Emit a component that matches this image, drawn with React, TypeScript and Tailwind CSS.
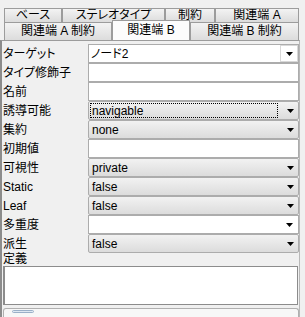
import React from 'react';

type Row = {
  label: string;
  kind: 'combo' | 'text' | 'select' | 'edit';
  value?: string;
  focus?: boolean;
};

const rows: Row[] = [
  { label: 'ターゲット', kind: 'combo', value: 'ノード2' },
  { label: 'タイプ修飾子', kind: 'text' },
  { label: '名前', kind: 'text' },
  { label: '誘導可能', kind: 'select', value: 'navigable', focus: true },
  { label: '集約', kind: 'select', value: 'none' },
  { label: '初期値', kind: 'text' },
  { label: '可視性', kind: 'select', value: 'private' },
  { label: 'Static', kind: 'select', value: 'false' },
  { label: 'Leaf', kind: 'select', value: 'false' },
  { label: '多重度', kind: 'edit' },
  { label: '派生', kind: 'select', value: 'false' },
];

function Arrow() {
  return (
    <svg width="7" height="4" viewBox="0 0 7 4" className="block">
      <path d="M0 0 H7 L3.5 4 Z" fill="#000" />
    </svg>
  );
}

function Tab({ label, w, selected, top }: { label: string; w: string; selected?: boolean; top?: boolean }) {
  return (
    <div
      className={`${w} flex justify-center border border-b-0 border-[#9c9c9c] ${
        selected
          ? 'relative z-10 -mt-[2px] h-[20px] bg-[#fcfcfc] pt-[1px] leading-[16px]'
          : top
          ? 'h-full bg-gradient-to-b from-[#f3f3f3] to-[#dcdcdc] leading-[12px]'
          : 'h-full bg-gradient-to-b from-[#f3f3f3] to-[#dcdcdc] leading-[16px]'
      } overflow-hidden text-[12px] text-black`}
    >
      {label}
    </div>
  );
}

function Value({ row }: { row: Row }) {
  if (row.kind === 'select') {
    return (
      <div className="flex h-[19px] items-center rounded-[2px] border border-[#acacac] bg-gradient-to-b from-[#f2f2f2] to-[#dcdcdc] pl-[1px] pr-[4px]">
        <div
          className={`flex h-[15px] flex-1 items-center pl-[1px] ${
            row.focus ? 'border border-dotted border-black' : 'border border-transparent'
          }`}
        >
          {row.value}
        </div>
        <div className="ml-[8px] flex w-[8px] justify-center">
          <Arrow />
        </div>
      </div>
    );
  }
  if (row.kind === 'combo') {
    return (
      <div className="flex h-[19px] items-center border border-[#acacac] bg-white pl-[2px]">
        <div className="flex-1">{row.value}</div>
        <div className="flex h-[17px] w-[18px] items-center justify-center border border-[#d8d8d8] bg-white">
          <Arrow />
        </div>
      </div>
    );
  }
  if (row.kind === 'edit') {
    return (
      <div className="flex h-[19px] items-center justify-end border border-[#acacac] bg-white pr-[5px]">
        <Arrow />
      </div>
    );
  }
  return <div className="h-[19px] border border-[#acacac] bg-white" />;
}

export default function App() {
  return (
    <div
      className="relative h-[317px] w-[305px] overflow-hidden bg-[#f0f0f0] text-[12px] text-black [font-feature-settings:'palt']"
      style={{ fontFamily: '"Liberation Sans", "Noto Sans CJK JP", sans-serif' }}
    >
      {/* Tabs */}
      <div className="px-[4px] pt-[8px]">
        <div className="flex h-[14px] w-[295px]">
          <Tab label="ベース" w="w-[58px]" top />
          <Tab label="ステレオタイプ" w="w-[103px]" top />
          <Tab label="制約" w="w-[50px]" top />
          <Tab label="関連端 A" w="w-[84px]" top />
        </div>
        <div className="flex h-[18px] w-[295px]">
          <Tab label="関連端 A 制約" w="w-[108px]" />
          <Tab label="関連端 B" w="w-[78px]" selected />
          <Tab label="関連端 B 制約" w="w-[109px]" />
        </div>
      </div>

      {/* Panel */}
      <div className="flex h-[277px] w-[300px] flex-col border-l-2 border-r border-t border-l-[#8c8c8c] border-r-[#b8b8b8] border-t-[#9c9c9c] pt-[3px]">
        <div className="grid grid-cols-[86px_211px]">
          {rows.map((row) => (
            <React.Fragment key={row.label}>
              <div className="flex h-[19px] items-center pl-[1px] leading-[14px]">{row.label}</div>
              <Value row={row} />
            </React.Fragment>
          ))}
        </div>
        <div className="h-[13px] pl-[1px] leading-[13px]">定義</div>
        <div className="ml-[1px] mr-[1px] h-[45px] border border-l-2 border-[#8c8c8c] bg-white" />
        <div className="ml-[1px] mt-[3px] flex h-[10px] rounded-t-[3px] border border-b-0 border-[#b0b0b0] bg-[#f7f7f7] pl-[8px]">
          <div className="mt-[1px] h-[3px] w-[22px] rounded-[2px] border border-[#9ab0c8] bg-[#dfe8f2]" />
        </div>
      </div>
    </div>
  );
}
